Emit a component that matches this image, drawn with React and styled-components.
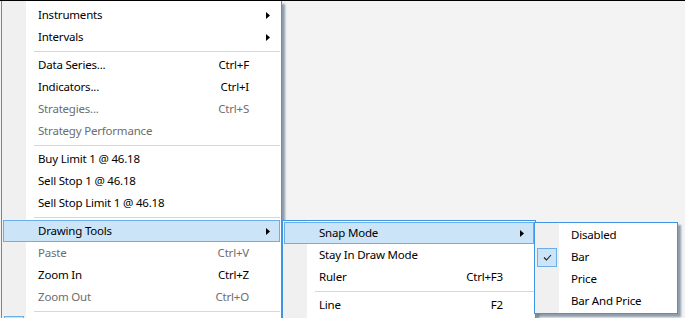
import React from 'react';
import styled, { createGlobalStyle, css } from 'styled-components';

const GlobalStyle = createGlobalStyle`
  html, body {
    margin: 0;
    padding: 0;
    background: #f3f3f3;
  }
  body {
    font-family: "Segoe UI", "Noto Sans", "Open Sans", Arial, sans-serif;
    font-size: 11.5px;
    letter-spacing: -0.2px;
    color: #000;
  }
`;

const Screen = styled.div`
  width: 685px;
  height: 318px;
  box-sizing: border-box;
  border-top: 1px solid #000;
  background: #f3f3f3;
  overflow: hidden;
  display: flex;
  align-items: flex-start;
`;

const Menu = styled.div`
  box-sizing: border-box;
  width: ${(p) => p.$width}px;
  background: linear-gradient(90deg, #f0f0f0 0, #f0f0f0 24px, #ffffff 24px);
  background-origin: padding-box;
  border: 1px solid #3f95e4;
  padding: 1px 1px ${(p) => p.$bottom || 1}px;
  box-shadow: 3px 3px 2px rgba(60, 85, 115, 0.55);
  display: flex;
  flex-direction: column;

  ${(p) =>
    p.$root &&
    css`
      margin-left: 1px;
      border-top: none;
      padding-top: 3px;
    `}

  ${(p) =>
    p.$sub &&
    css`
      position: absolute;
      top: -1px;
      left: calc(100% + ${p.$offset}px);
      z-index: ${p.$z};
    `}
`;

const Item = styled.div`
  position: relative;
  box-sizing: border-box;
  height: 22px;
  display: grid;
  grid-template-columns: 34px 1fr auto 30px;
  align-items: center;
  border: 1px solid transparent;
  color: ${(p) => (p.$disabled ? '#6d6d6d' : '#000')};
  white-space: nowrap;

  ${(p) =>
    p.$active &&
    css`
      background: #cce4f8;
      border-color: #6aaeea;
    `}
`;

const Check = styled.span`
  box-sizing: border-box;
  width: 20px;
  height: 19px;
  margin-left: ${(p) => p.$inset}px;
  display: flex;
  align-items: center;
  justify-content: center;
  background: #cce4f8;
  border: 1px solid #6aaeea;
`;

const Label = styled.span`
  line-height: 20px;
`;

const Shortcut = styled.span`
  line-height: 20px;
  text-align: right;
  padding-left: 20px;
`;

const Arrow = styled.span`
  justify-self: end;
  margin-right: 9px;
  display: flex;
`;

const Separator = styled.div`
  height: 6px;
  display: flex;
  align-items: center;
  padding-left: 31px;

  &::after {
    content: '';
    flex: 1;
    height: 1px;
    background: #d7d7d7;
  }
`;

const Triangle = () => (
  <svg width="4" height="7" viewBox="0 0 4 7">
    <polygon points="0,0 4,3.5 0,7" fill="#000" />
  </svg>
);

const Tick = () => (
  <svg width="9" height="7" viewBox="0 0 9 7">
    <polyline points="1,3.5 3.5,6 8,1" fill="none" stroke="#1a1a1a" strokeWidth="1.1" />
  </svg>
);

const MenuItem = ({ label, shortcut, disabled, active, submenu, checked, inset = 1, children }) => (
  <Item $disabled={disabled} $active={active}>
    <span>{checked && <Check $inset={inset}><Tick /></Check>}</span>
    <Label>{label}</Label>
    <Shortcut>{shortcut}</Shortcut>
    {submenu ? (
      <Arrow>
        <Triangle />
      </Arrow>
    ) : (
      <span />
    )}
    {children}
  </Item>
);

const snapModes = [
  { label: 'Disabled' },
  { label: 'Bar', checked: true },
  { label: 'Price' },
  { label: 'Bar And Price' },
];

const SnapMenu = () => (
  <Menu $sub $width={144} $offset={1} $z={3}>
    {snapModes.map((m) => (
      <MenuItem key={m.label} label={m.label} checked={m.checked} inset={0} />
    ))}
  </Menu>
);

// the list goes on below the window edge, so leave room under "Line"
const DrawingMenu = () => (
  <Menu $sub $width={254} $offset={3} $z={2} $bottom={12}>
    <MenuItem label="Snap Mode" submenu active>
      <SnapMenu />
    </MenuItem>
    <MenuItem label="Stay In Draw Mode" />
    <MenuItem label="Ruler" shortcut="Ctrl+F3" />
    <Separator />
    <MenuItem label="Line" shortcut="F2" />
  </Menu>
);

export default function App() {
  return (
    <>
      <GlobalStyle />
      <Screen>
        <Menu $root $width={281}>
          <MenuItem label="Instruments" submenu />
          <MenuItem label="Intervals" submenu />
          <Separator />
          <MenuItem label="Data Series..." shortcut="Ctrl+F" />
          <MenuItem label="Indicators..." shortcut="Ctrl+I" />
          <MenuItem label="Strategies..." shortcut="Ctrl+S" disabled />
          <MenuItem label="Strategy Performance" disabled />
          <Separator />
          <MenuItem label="Buy Limit 1 @ 46.18" />
          <MenuItem label="Sell Stop 1 @ 46.18" />
          <MenuItem label="Sell Stop Limit 1 @ 46.18" />
          <Separator />
          <MenuItem label="Drawing Tools" submenu active>
            <DrawingMenu />
          </MenuItem>
          <MenuItem label="Paste" shortcut="Ctrl+V" disabled />
          <MenuItem label="Zoom In" shortcut="Ctrl+Z" />
          <MenuItem label="Zoom Out" shortcut="Ctrl+O" disabled />
          <Separator />
          <MenuItem checked inset={0} />
        </Menu>
      </Screen>
    </>
  );
}
